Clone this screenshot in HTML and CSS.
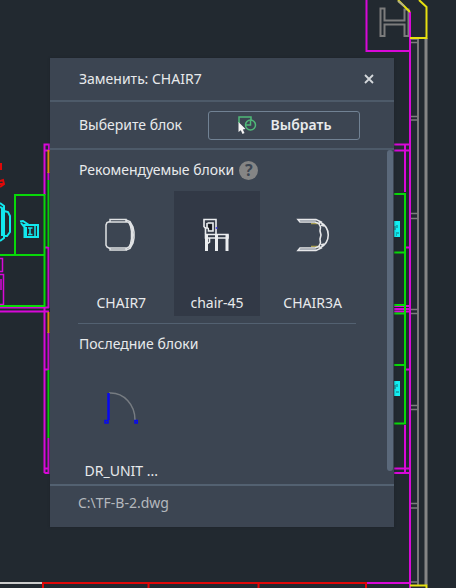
FILE: index.html
```html
<!DOCTYPE html>
<html lang="ru">
<head>
<meta charset="utf-8">
<title>Заменить: CHAIR7</title>
<link rel="stylesheet" href="styles.css">
</head>
<body>
<svg class="drawing" width="456" height="588" viewBox="0 0 456 588" aria-hidden="true" fill="none" stroke-width="2">
  <g stroke="#777" stroke-width="2">
    <path d="M418 38V586"/>
    <path d="M426 38V585" stroke="#858585" stroke-width="3"/>
    <path d="M380.500 8.500H384.500V20.500H404.500V9.500H408.500V36H404.500V24.500H384.500V36H380.500Z" stroke="#7c7c7c"/>
    <path d="M410 39h8M410 42.500h8M410 116.500h8M410 120h8M410 213.500h8M410 218.500h8M410 309.500h8M410 313.500h8M410 405.500h8M410 409.500h8M410 503.500h8M410 508h8M410 582h8" stroke-width="1.500" stroke="#7c7c7c"/>
  </g>
  <g stroke="#d808d8">
    <path d="M366.500 0V51H410M410 12V588"/>
    <path d="M389 144.500h21M389 150.500h21M405 144V192M406 247.500h4M394 306h16M394 309h16M394 311.500h16M405 425V473M394 468.500h16M394 473h16M406 369.500h4"/>
    <path d="M44.500 144.500H49V150.500H44.500ZM44.500 150V195M48.500 172V180M44.500 247.500H48.500M48.500 247V308M0 307.500H49M0 311.500H49M44.500 307V473M48.500 332V370M44.500 369.500H48.500M48.500 438V473H44.500M44.500 468.500h4"/>
    <path d="M0 258.500H2.500V271.500H0M0 274.500H3.500V304.500H0M1 279V290" stroke-width="1.500"/>
    <path d="M366 583H410"/>
  </g>
  <g stroke="#08d808">
    <path d="M0 255H44M15 255V195H44.500V306H0"/>
    <path d="M48.500 180V247M48.500 370V438"/>
    <path d="M394 194H405V423.500H394M394 252.500h11M394 305h11M394 313.500h11M394 365h11"/>
  </g>
  <path d="M48.500 150V173M48.500 312V333" stroke="#e99508"/>
  <g stroke="#e6e010">
    <path d="M398 0L410 12M419 0L426.500 7V38H410M410 585.500H426.500V588"/>
    <path d="M398 1l6 5" stroke="#b5b184"/>
  </g>
  <path d="M0 583H43" stroke="#ccc"/>
  <path d="M43 588V583H366V588M148.500 583V588M258.500 583V588" stroke="#e00808"/>
  <path d="M0 163H2V170H0Z" fill="#e00808"/>
  <path d="M0 181L3 180L4 184L0 187M0 184H4" stroke="#e00808"/>
  <g stroke="#12e8ee" stroke-width="2">
    <path d="M0 203L4 206V238L0 241M4 211L8 212L10 216V232L7 236H4M0 207L2 208V236"/>
    <path d="M24.500 225H38V237H24.500ZM20 221.500L23 221L29 225M21 223L25 228"/>
    <path d="M28 228H32.500M28 234.500H32.500M30 228V235M35 226V236" stroke-width="1.500"/>
    <path d="M26 227V237"/>
  </g>
  <path d="M394 221h6v16h-6zM394 381h6v15h-6z" fill="#12f0f4"/>
  <path d="M395 226v4m2-5v3m-1 5h3m-3 2h1M395 385v4m2-5v3m-1 5h3" stroke="#176a74" stroke-width="1"/>
</svg>

<main class="dialog">
  <header class="titlebar">
    <h1 class="title">Заменить: CHAIR7</h1>
    <button class="close" type="button" aria-label="Закрыть">
      <svg width="10" height="10" viewBox="0 0 10 10" fill="none" stroke="#d5d8dc" stroke-width="1.800"><path d="M1 1L9 9M9 1L1 9"/></svg>
    </button>
  </header>

  <section class="picker">
    <span class="picker-label" id="pick-label">Выберите блок</span>
    <button class="pick" type="button" aria-describedby="pick-label">
      <svg width="20" height="20" viewBox="0 0 20 20" fill="none">
        <path d="M2 8V2H14V6M8 10H13.500V6" stroke="#4fb978" stroke-width="1.500"/>
        <circle cx="13.500" cy="10" r="5" stroke="#4fb978" stroke-width="1.500"/>
        <path d="M1.500 7L8.500 14L5.800 14.400L7.500 18L5.500 19L3.800 15.300L1.500 17Z" fill="#f5f5f5"/>
      </svg>
      <span>Выбрать</span>
    </button>
  </section>

  <div class="content">
    <section class="group">
      <div class="heading-row">
        <h2 class="heading">Рекомендуемые блоки</h2>
        <button class="help" type="button" aria-label="Справка">?</button>
      </div>
      <div class="blocks">
        <button class="block" type="button">
          <svg width="34" height="34" viewBox="0 0 34 34" fill="none" stroke="#e0e2e4" stroke-width="1.500">
            <path d="M6 1.500H22V4H6ZM6 30H22V32H6ZM6 3.500L3 4.500L2 7V27L3 29L6 30.500M22 3.500L25 4.500L26.500 8L27.500 13V21L26.500 26L25 29L22 30.500"/>
            <path d="M22 2L26 3.500L29 9L30 14V20L29 25L26 30.500L22 32M25 4.500L28 10L28.500 17L28 24L25 29.500"/>
          </svg>
          <span>CHAIR7</span>
        </button>
        <button class="block selected" type="button" aria-pressed="true">
          <svg width="34" height="34" viewBox="0 0 34 34" fill="none" stroke="#eceef0" stroke-width="1.600">
            <path d="M4 9V1.500H16V16M7.500 5H13V13H8.500V10H7V5M4 9L5.500 10V16"/>
            <path d="M9 7H11V11H10V9H9Z" stroke="#15181c"/>
            <path d="M5.500 16.500H28V20H5.500ZM9.500 20V24L7 26" stroke-width="1.600"/>
            <path d="M6.500 16V33M16.500 17V33M27 17V33" stroke-width="3"/>
            <path d="M16.500 9v2" stroke="#5050e8"/>
          </svg>
          <span>chair-45</span>
        </button>
        <button class="block" type="button">
          <svg width="34" height="34" viewBox="0 0 34 34" fill="none" stroke="#e6e7e9" stroke-width="1.600">
            <path d="M15 5.500H23M15 28.500H23" stroke="#a9a04f"/>
            <path d="M2 1.500H20L25 4L23 5.500L19 4H4ZM2 32.500H20L25 30L23 28.500L19 30H4Z"/>
            <path d="M4 2.800H20M4 31.200H20" stroke="#aab0b8"/>
            <path d="M24 4C35 10 35 24 24 30M23 6L24.500 9L24 13L25 17L24 21L24.500 25L23 28M25 7L28 8M25 27L28 26"/>
          </svg>
          <span>CHAIR3A</span>
        </button>
      </div>
    </section>
    <section class="group recent">
      <h2 class="heading">Последние блоки</h2>
      <div class="blocks">
        <button class="block" type="button">
          <svg width="34" height="34" viewBox="0 0 34 34" fill="none" stroke="#0808f0">
            <path d="M5 1C20 0 31 13 31 28" stroke="#777c82" stroke-width="1.500"/>
            <path d="M4.500 1V28" stroke-width="2.500"/>
            <path d="M1 28.500H4V31H1ZM31 28.500H33.500V31H31Z" stroke-width="1.500"/>
          </svg>
          <span>DR_UNIT ...</span>
        </button>
      </div>
    </section>
    <div class="scroll-thumb"></div>
  </div>

  <footer class="path">C:\TF-B-2.dwg</footer>
</main>
</body>
</html>
```
FILE: styles.css
```css
* {
  box-sizing: border-box;
}

body {
  margin: 0;
  padding: 58px 62px 61px 50px;
  background: #222930;
  color: #e8eaec;
  font: 14px/20px "Noto Sans", sans-serif;
}

.drawing {
  position: absolute;
  top: 0;
  left: 0;
}

.dialog {
  position: relative;
  background: #3c4552;
  box-shadow: 0 0 2px #1c2229;
}

button {
  padding: 0;
  border: 0;
  background: none;
  color: inherit;
  font: inherit;
}

.titlebar,
.picker {
  display: flex;
  align-items: center;
  justify-content: space-between;
  border-bottom: 2px solid #4d5a69;
}

.titlebar {
  height: 44px;
  padding: 0 20px 0 29px;
}

.title,
.heading {
  margin: 0;
  font-size: 14px;
  font-weight: 400;
}

.close {
  display: flex;
}

.picker {
  height: 48px;
  padding: 0 34px 0 29px;
}

.pick {
  display: flex;
  align-items: center;
  justify-content: center;
  gap: 14px;
  width: 152px;
  height: 29px;
  border: 1px solid #718294;
  border-radius: 3px;
  font-weight: 600;
}

.content {
  position: relative;
  padding: 10px 38px 0 28px;
}

.heading-row {
  display: flex;
  align-items: center;
  gap: 5px;
}

.heading {
  padding-left: 1px;
}

.help {
  width: 19px;
  height: 19px;
  border-radius: 50%;
  background: #858585;
  color: #3c4552;
  font-size: 16px;
  font-weight: 700;
  line-height: 19px;
}

.blocks {
  display: grid;
  grid-template-columns: repeat(3, 1fr);
  gap: 9px;
  margin-top: 11px;
}

.block {
  display: flex;
  flex-direction: column;
  align-items: center;
  justify-content: space-between;
  height: 125px;
  padding: 27px 0 3px;
}

.selected {
  background: #323946;
}

.recent {
  margin-top: 7px;
  padding-top: 10px;
  border-top: 1px solid #536171;
}

.recent .block {
  height: 119px;
}

.scroll-thumb {
  position: absolute;
  top: 0;
  right: 1px;
  bottom: 13px;
  width: 6px;
  border-radius: 3px;
  background: #5b697b;
}

.path {
  height: 43px;
  padding: 7px 28px;
  border-top: 2px solid #536171;
  color: #b4b8bd;
}
```
